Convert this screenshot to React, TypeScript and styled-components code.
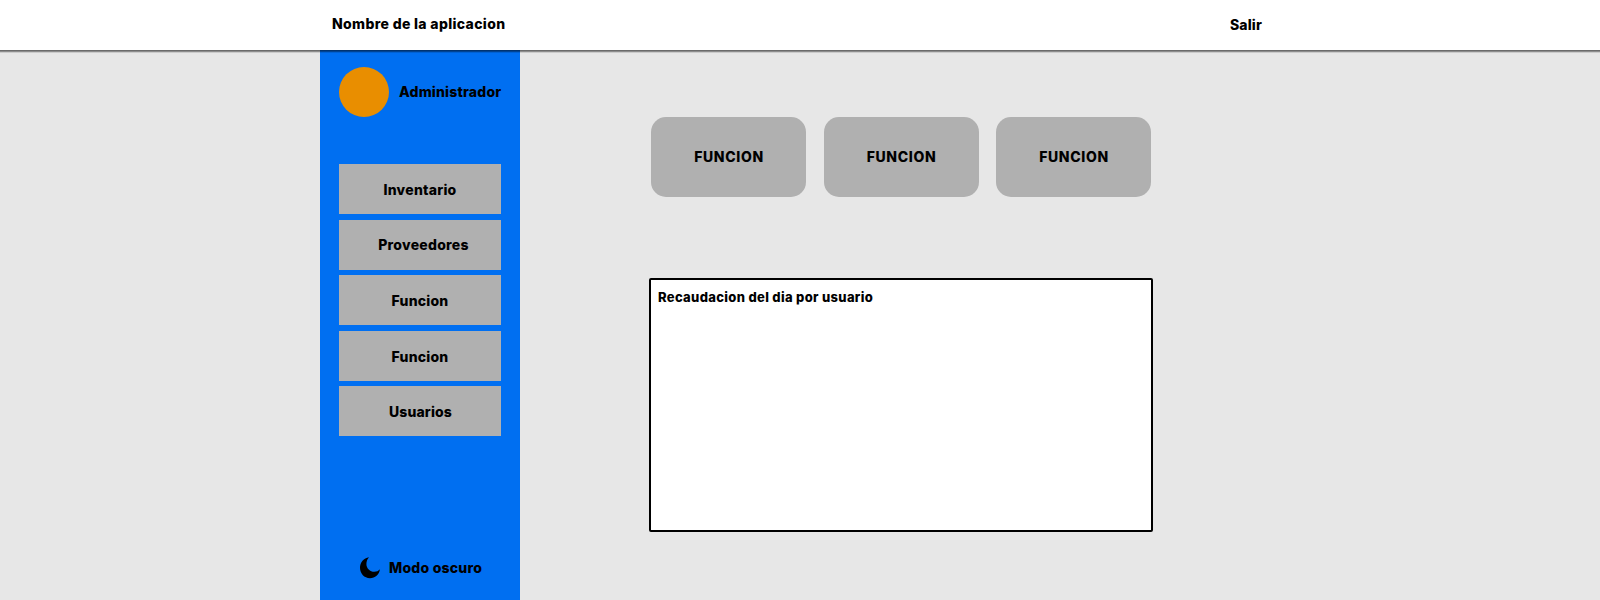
import React from "react";
import styled, { createGlobalStyle } from "styled-components";

const GlobalStyle = createGlobalStyle`
  * { box-sizing: border-box; }
  body { margin: 0; background: #e7e7e7; }
`;

const Page = styled.div`
  height: 600px;
  display: flex;
  flex-direction: column;
  overflow: hidden;
  color: #000;
  background: #e7e7e7;
  font: 800 14px/20px Inter, "Liberation Sans", sans-serif;
`;

const Header = styled.header`
  height: 50px;
  flex: none;
  display: flex;
  justify-content: space-between;
  padding: 14px 338px 0 332px;
  background: #fff;
  position: relative;
  box-shadow: 0 1px 0 rgba(0, 0, 0, 0.24), 0 2px 0 rgba(0, 0, 0, 0.3), 0 3px 0 rgba(0, 0, 0, 0.12);
`;

const Label = styled.span<{ $spacing?: number; $size?: number }>`
  white-space: nowrap;
  letter-spacing: ${(p) => p.$spacing ?? 0}px;
  font-size: ${(p) => p.$size ?? 14}px;
`;

const Exit = styled.div`
  padding-top: 1px;
`;

const Body = styled.div`
  flex: 1;
  display: flex;
  padding-left: 320px;
`;

const Sidebar = styled.aside`
  width: 200px;
  display: flex;
  flex-direction: column;
  padding: 17px 19px 21px;
  background: #006ff1;
`;

const Profile = styled.div`
  height: 50px;
  display: flex;
  align-items: center;
  gap: 10px;
`;

const Avatar = styled.div`
  width: 50px;
  height: 50px;
  flex: none;
  border-radius: 50%;
  background: #e98e00;
`;

const Menu = styled.nav`
  margin-top: 47px;
  display: flex;
  flex-direction: column;
  gap: 5.5px;
`;

const MenuItem = styled.div<{ $indent?: number; $drop?: number }>`
  height: 50px;
  display: flex;
  align-items: center;
  justify-content: center;
  padding: ${(p) => p.$drop ?? 2}px 0 0 ${(p) => p.$indent ?? 0}px;
  background: #b0b0b0;
`;

const ThemeToggle = styled.div`
  margin-top: auto;
  display: flex;
  align-items: center;
  gap: 9px;
  padding-left: 21px;
`;

const Main = styled.main`
  padding: 67px 0 0 129px;
`;

const Cards = styled.div`
  display: flex;
  gap: 17.5px;
  padding-left: 2px;
`;

const Card = styled.div`
  width: 155px;
  height: 80px;
  display: flex;
  align-items: center;
  justify-content: center;
  padding-left: 1px;
  border-radius: 15px;
  background: #b0b0b0;
`;

const Report = styled.section`
  width: 504px;
  height: 254px;
  margin-top: 81px;
  padding: 7px;
  border: 2px solid #000;
  border-radius: 2px;
  background: #fff;
`;

const menu = [
  { text: "Inventario", spacing: 0.25 },
  { text: "Proveedores", spacing: 0.25, indent: 7, drop: 0 },
  { text: "Funcion", spacing: 0.2 },
  { text: "Funcion", spacing: 0.2 },
  { text: "Usuarios", spacing: 0.12, indent: 1 },
];

export default function App() {
  return (
    <Page>
      <GlobalStyle />
      <Header>
        <Label $spacing={0.34}>Nombre de la aplicacion</Label>
        <Exit><Label $spacing={0.15}>Salir</Label></Exit>
      </Header>
      <Body>
        <Sidebar>
          <Profile>
            <Avatar />
            <Label $spacing={0.2}>Administrador</Label>
          </Profile>
          <Menu>
            {menu.map((m, i) => (
              <MenuItem key={i} $indent={m.indent} $drop={m.drop}>
                <Label $spacing={m.spacing}>{m.text}</Label>
              </MenuItem>
            ))}
          </Menu>
          <ThemeToggle>
            <svg width="20" height="22" viewBox="0 0 20 22">
              <path d="M9 0.2C3.8 1 0 5.400 0 10.800C0 16.600 4.300 21.200 10 21.200C15 21.200 19.200 17.600 19.900 12.300C18.500 14 16.700 14.800 14.400 14.800C10 14.800 6.400 11.500 6.400 7C6.400 4.400 7.300 2 9 0.200Z" />
            </svg>
            <Label $spacing={0.22}>Modo oscuro</Label>
          </ThemeToggle>
        </Sidebar>
        <Main>
          <Cards>
            {[0, 1, 2].map((i) => (
              <Card key={i}><Label $spacing={0.65}>FUNCION</Label></Card>
            ))}
          </Cards>
          <Report>
            <Label $size={13} $spacing={0.32}>Recaudacion del dia por usuario</Label>
          </Report>
        </Main>
      </Body>
    </Page>
  );
}
